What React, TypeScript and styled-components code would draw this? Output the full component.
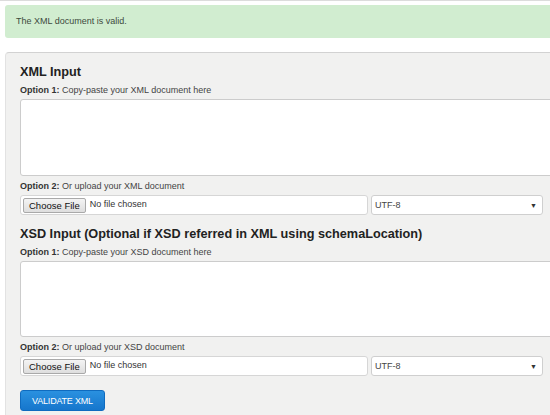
import React from 'react';
import styled, { createGlobalStyle } from 'styled-components';

const GlobalStyle = createGlobalStyle`
  html, body {
    margin: 0;
    padding: 0;
    background: #ffffff;
    overflow: hidden;
  }
  body {
    font-family: 'Liberation Sans', Arial, sans-serif;
    color: #333;
  }
`;

const Page = styled.div`
  width: 600px;
  border-top: 1px solid #dcdcdc;
  padding: 4px 0 0 5px;
`;

const Alert = styled.div`
  background: #d1edd0;
  color: #3d4a3d;
  font-size: 9px;
  height: 33px;
  line-height: 33px;
  padding: 0 11px;
  border-radius: 3px 0 0 3px;
`;

const Panel = styled.div`
  margin-top: 14px;
  background: #f1f1f0;
  border-top: 1px solid #d2d2d2;
  border-left: 1px solid #e2e2e2;
  border-radius: 4px 0 0 0;
  padding: 10px 0 4px 14px;
`;

const Heading = styled.h2<{ $top?: number }>`
  margin: ${p => p.$top ?? 0}px 0 0 0;
  font-size: 12.7px;
  font-weight: bold;
  color: #222;
  line-height: 18px;
`;

const Label = styled.div`
  font-size: 9px;
  color: #444;
  line-height: 12px;
  margin: 3px 0 3px;

  b {
    color: #333;
  }
`;

const TextArea = styled.textarea<{ $h?: number }>`
  display: block;
  box-sizing: border-box;
  width: 600px;
  height: ${p => p.$h ?? 77}px;
  background: #fff;
  border: 1px solid #cccccc;
  border-radius: 3px 0 0 3px;
  resize: none;
  margin: 0 0 4px;
  outline: none;
`;

const UploadRow = styled.div`
  display: flex;
  gap: 3px;
  height: 20px;
`;

const FileBox = styled.div`
  box-sizing: border-box;
  width: 348px;
  height: 20px;
  background: #fff;
  border: 1px solid #d6d6d6;
  border-radius: 3px;
  display: flex;
  align-items: center;
  padding-left: 2px;
  gap: 4px;
  font-size: 9px;
  color: #333;
`;

const ChooseButton = styled.span`
  box-sizing: border-box;
  height: 15px;
  padding: 0 5px;
  display: flex;
  align-items: center;
  font-size: 9.5px;
  color: #111;
  background: linear-gradient(#f4f4f4, #dedede);
  border: 1px solid #a9a9a9;
  border-radius: 2px;
`;

const NoFile = styled.span`
  margin-top: -3px;
`;

const Select = styled.div`
  box-sizing: border-box;
  width: 172px;
  height: 20px;
  background: #fff;
  border: 1px solid #cfcfcf;
  border-radius: 3px;
  display: flex;
  align-items: center;
  justify-content: space-between;
  padding: 0 5px 0 3px;
  font-size: 9px;
  color: #444;
`;

const Caret = styled.span`
  font-size: 7px;
  color: #333;
`;

const ValidateButton = styled.button`
  margin-top: 14px;
  width: 85px;
  height: 21px;
  border: 1px solid #0f6bbf;
  border-radius: 3px;
  background: linear-gradient(#2a91e0, #1676cc);
  color: #fff;
  font-family: 'Liberation Sans', Arial, sans-serif;
  font-size: 9px;
  letter-spacing: -0.2px;
  padding: 0;
  cursor: pointer;
`;

const Upload: React.FC = () => (
  <UploadRow>
    <FileBox>
      <ChooseButton>Choose File</ChooseButton>
      <NoFile>No file chosen</NoFile>
    </FileBox>
    <Select>
      UTF-8
      <Caret>▼</Caret>
    </Select>
  </UploadRow>
);

const App: React.FC = () => (
  <>
    <GlobalStyle />
    <Page>
      <Alert>The XML document is valid.</Alert>
      <Panel>
        <Heading>XML Input</Heading>
        <Label><b>Option 1:</b> Copy-paste your XML document here</Label>
        <TextArea />
        <Label><b>Option 2:</b> Or upload your XML document</Label>
        <Upload />

        <Heading $top={10}>XSD Input (Optional if XSD referred in XML using schemaLocation)</Heading>
        <Label><b>Option 1:</b> Copy-paste your XSD document here</Label>
        <TextArea $h={76} />
        <Label><b>Option 2:</b> Or upload your XSD document</Label>
        <Upload />

        <ValidateButton>VALIDATE XML</ValidateButton>
      </Panel>
    </Page>
  </>
);

export default App;
